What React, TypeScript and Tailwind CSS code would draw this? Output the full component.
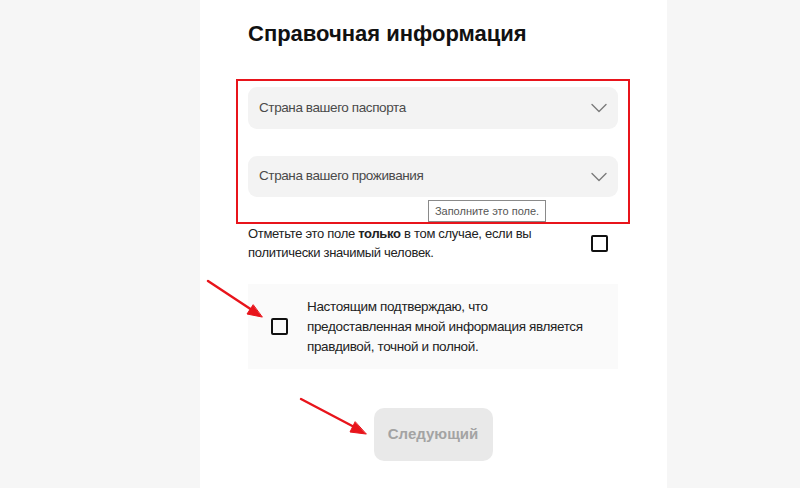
import React from "react";

const font = { fontFamily: '"Liberation Sans", Arial, sans-serif' };

function Chevron() {
  return (
    <svg width="16" height="10" viewBox="0 0 16 10" fill="none">
      <path d="M1 1.5 L8 8.5 L15 1.5" stroke="#7a7a7a" strokeWidth="1.4" strokeLinecap="round" strokeLinejoin="round" />
    </svg>
  );
}

function Select({ label, h }: { label: string; h: string }) {
  return (
    <div className={`flex ${h} items-center justify-between rounded-[9px] bg-[#f3f3f3] pl-[11px] pr-[11px]`}>
      <span className="text-[13.5px] tracking-[-0.4px] text-[#4a4a4a]">{label}</span>
      <Chevron />
    </div>
  );
}

function Box() {
  return <div className="h-[17px] w-[17px] shrink-0 rounded-[2px] border-2 border-[#111]" />;
}

export default function App() {
  return (
    <div className="relative h-[488px] w-[800px] overflow-hidden bg-[#f6f6f6]" style={font}>
      <div className="ml-[200px] h-full w-[467px] bg-white pl-[48px] pt-[20px]">
        <div className="w-[370px]">
          <h1 className="text-[22px] font-bold leading-[28px] text-[#111]">
            Справочная информация
          </h1>

          <div className="relative -mx-3 mt-[31px] flex flex-col gap-[27px] border-2 border-[#e8141b] px-[10px] pb-[25px] pt-[6px]">
            <Select label="Страна вашего паспорта" h="h-[42px]" />
            <Select label="Страна вашего проживания" h="h-[41px]" />
            <div className="absolute left-[190px] top-[119px] flex h-[22px] w-[118px] items-center justify-center border border-[#8a8a8a] bg-white text-[11px] text-[#555]">
              Заполните это поле.
            </div>
          </div>

          <div className="flex items-center justify-between pr-[10px]">
            <p className="w-[300px] text-[13px] leading-[19px] tracking-[-0.3px] text-[#222]">
              Отметьте это поле <b>только</b> в том случае, если вы политически значимый человек.
            </p>
            <Box />
          </div>

          <div className="mt-[22px] flex h-[85px] items-center gap-[19px] bg-[#fafafa] pl-[23px] pr-[20px]">
            <Box />
            <p className="w-[285px] text-[13.5px] leading-[20px] tracking-[-0.35px] text-[#222]">
              Настоящим подтверждаю, что предоставленная мной информация является правдивой, точной и полной.
            </p>
          </div>

          <div className="mt-[39px] flex justify-center">
            <button className="h-[53px] w-[119px] rounded-[10px] bg-[#e9e9e9] text-[15px] font-bold text-[#a3a3a3]">
              Следующий
            </button>
          </div>
        </div>
      </div>

      <svg className="pointer-events-none absolute left-0 top-0" width="800" height="488" viewBox="0 0 800 488">
        <g stroke="#e8141b" strokeWidth="2.4" strokeLinecap="round" fill="#e8141b">
          <line x1="208" y1="281" x2="255" y2="312" />
          <path d="M262 317 L247 314 L253 305 Z" strokeWidth="1" />
          <line x1="301" y1="399" x2="358" y2="429" />
          <path d="M366 434 L350 432 L355 422 Z" strokeWidth="1" />
        </g>
      </svg>
    </div>
  );
}
